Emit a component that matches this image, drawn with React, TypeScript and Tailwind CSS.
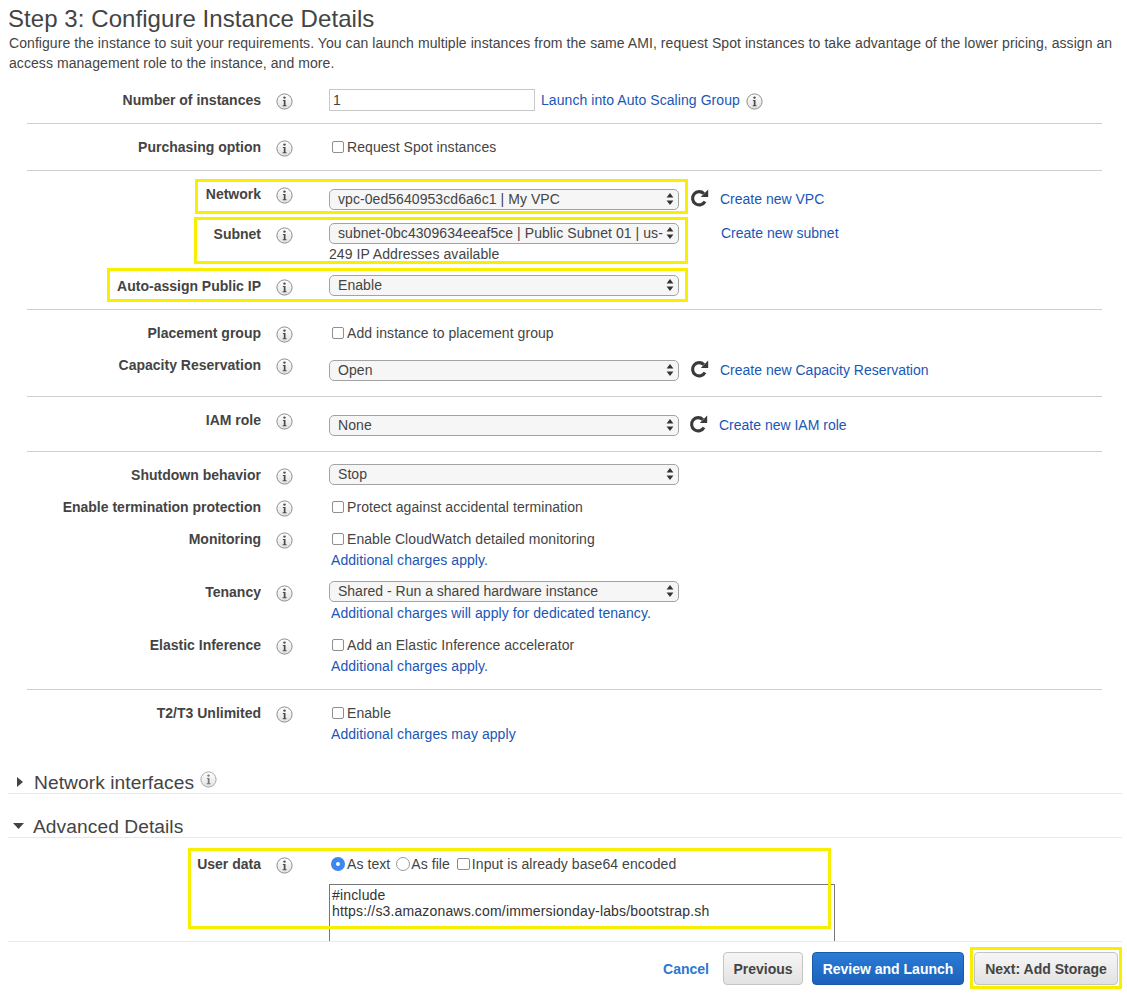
import React from "react";

const Info = ({ faint = false }: { faint?: boolean }) => (
  <svg width="17" height="17" viewBox="0 0 17 17" className="block">
    <defs>
      <linearGradient id="ig" x1="0" y1="0" x2="0" y2="1">
        <stop offset="0" stopColor="#ffffff" />
        <stop offset="1" stopColor="#e2e2e2" />
      </linearGradient>
    </defs>
    <circle cx="8.5" cy="8.5" r="7.6" fill="url(#ig)" stroke={faint ? "#a8a8a8" : "#8c8c8c"} strokeWidth="1" />
    <circle cx="8.5" cy="4.6" r="1.2" fill={faint ? "#777" : "#4a4a4a"} />
    <path d="M6.9 6.9h2.6v5.4h1v1H6.7v-1h1.1V7.9H6.9z" fill={faint ? "#777" : "#4a4a4a"} />
  </svg>
);

const Refresh = () => (
  <svg width="19" height="19" viewBox="0 0 19 19" className="block">
    <path d="M15 12.4A6.6 6.6 0 1 1 13.9 4.6" fill="none" stroke="#3a3a3a" strokeWidth="3.1" />
    <path d="M10.8 8h7.4V.6z" fill="#3a3a3a" />
  </svg>
);

const Arrows = () => (
  <svg width="8" height="14" viewBox="0 0 8 14" className="block">
    <path d="M4 1l3.4 4.6H.6zM4 13L.6 8.4h6.8z" fill="#333" />
  </svg>
);

const Select = ({ children }: { children: React.ReactNode }) => (
  <div className="flex h-[21px] w-[350px] shrink-0 items-center justify-between rounded-[5px] border border-[#a3a3a3] bg-[#f6f6f6] pb-[1px] pl-[8px] pr-[4px] text-[14px] leading-[18px] text-[#444]">
    <span className="whitespace-nowrap">{children}</span>
    <Arrows />
  </div>
);

const Check = () => (
  <span className="mr-[3px] inline-block h-[12px] w-[12px] shrink-0 rounded-[2px] border border-[#8f8f8f] bg-white" />
);

const A = ({ children }: { children: React.ReactNode }) => (
  <a className="block whitespace-nowrap text-[14px] leading-[20px] text-[#1a56b4]">{children}</a>
);

const Create = ({ children, className }: { children: React.ReactNode; className: string }) => (
  <span className={`mb-[2px] tracking-normal ${className}`}>
    <A>{children}</A>
  </span>
);

const CheckLine = ({ children }: { children: React.ReactNode }) => (
  <div className="flex h-[20px] items-center pl-[3px] text-[14px] text-[#444]">
    <Check />
    <span className="whitespace-nowrap">{children}</span>
  </div>
);

const Row = ({
  label,
  className,
  children,
}: {
  label: string;
  className?: string;
  children?: React.ReactNode;
}) => (
  <div className={`flex items-start ${className ?? ""}`}>
    <div className="w-[234px] whitespace-nowrap text-right text-[14px] font-bold leading-[20px] tracking-normal text-[#444]">{label}</div>
    <div className="ml-[15px] mr-[36px] w-[17px] pt-[3px]">
      <Info />
    </div>
    <div className="min-w-0 flex-1">{children}</div>
  </div>
);

const Section = ({ className, children }: { className: string; children: React.ReactNode }) => (
  <div className={`ml-[19px] mr-[25px] ${className}`}>{children}</div>
);

const Controls = ({ className, children }: { className: string; children: React.ReactNode }) => (
  <div className={`flex h-[21px] items-center ${className}`}>{children}</div>
);

export default function App() {
  return (
    <div className="relative h-[994px] w-[1127px] overflow-hidden bg-white pl-[8px] font-['Liberation_Sans',Arial,sans-serif] tracking-[0.065px] text-[#444]">
      <div className="h-[76px]">
        <h1 className="pt-[5px] text-[24px] font-normal leading-[28px] text-[#444]">Step 3: Configure Instance Details</h1>
        <p className="w-[1108px] pl-[1px] text-[14px] leading-[20px] text-[#444]">
          Configure the instance to suit your requirements. You can launch multiple instances from the same AMI, request Spot instances to take advantage of the lower pricing, assign an access management role to the instance, and more.
        </p>
      </div>

      <Section className="border-b border-[#cfcfcf] pb-[13px] pt-[14px]">
        <Row label="Number of instances" className="h-[20px]">
          <div className="-mt-px flex h-[22px] items-center">
            <div className="h-[22px] w-[206px] border border-[#c8c8c8] pl-[3px] text-[14px] leading-[20px]">1</div>
            <span className="ml-[6px]"><A>Launch into Auto Scaling Group</A></span>
            <span className="ml-[6px] pt-[2px]"><Info /></span>
          </div>
        </Row>
      </Section>

      <Section className="border-b border-[#cfcfcf] pb-[13px] pt-[13px]">
        <Row label="Purchasing option" className="h-[20px]">
          <CheckLine>Request Spot instances</CheckLine>
        </Row>
      </Section>

      <Section className="border-b border-[#cfcfcf] pb-[13px] pt-[13px]">
        <Row label="Network" className="h-[40px]">
          <Controls className="mt-[5px]">
            <Select>vpc-0ed5640953cd6a6c1 | My VPC</Select>
            <span className="mb-[3px] ml-[11px]"><Refresh /></span>
            <Create className="ml-[11px]">Create new VPC</Create>
          </Controls>
        </Row>
        <Row label="Subnet" className="h-[52px]">
          <Controls className="-mt-px">
            <Select>subnet-0bc4309634eeaf5ce | Public Subnet 01 | us-</Select>
            <Create className="ml-[42px]">Create new subnet</Create>
          </Controls>
          <div className="text-[14px] leading-[20px]">249 IP Addresses available</div>
        </Row>
        <Row label="Auto-assign Public IP" className="h-[20px]">
          <div className="-mt-px">
            <Select>Enable</Select>
          </div>
        </Row>
      </Section>

      <Section className="border-b border-[#cfcfcf] pb-[16px] pt-[13px]">
        <Row label="Placement group" className="h-[32px]">
          <CheckLine>Add instance to placement group</CheckLine>
        </Row>
        <Row label="Capacity Reservation" className="h-[25px]">
          <Controls className="mt-[5px]">
            <Select>Open</Select>
            <span className="mb-[3px] ml-[11px]"><Refresh /></span>
            <Create className="ml-[11px]">Create new Capacity Reservation</Create>
          </Controls>
        </Row>
      </Section>

      <Section className="border-b border-[#cfcfcf] pb-[16px] pt-[13px]">
        <Row label="IAM role" className="h-[25px]">
          <Controls className="mt-[5px]">
            <Select>None</Select>
            <span className="mb-[3px] ml-[10px]"><Refresh /></span>
            <Create className="ml-[11px]">Create new IAM role</Create>
          </Controls>
        </Row>
      </Section>

      <Section className="border-b border-[#cfcfcf] pb-[13px] pt-[13px]">
        <Row label="Shutdown behavior" className="h-[32px]">
          <div className="-mt-px"><Select>Stop</Select></div>
        </Row>
        <Row label="Enable termination protection" className="h-[32px]">
          <CheckLine>Protect against accidental termination</CheckLine>
        </Row>
        <Row label="Monitoring" className="h-[53px]">
          <CheckLine>Enable CloudWatch detailed monitoring</CheckLine>
          <div className="mt-px pl-[2px]"><A>Additional charges apply.</A></div>
        </Row>
        <Row label="Tenancy" className="h-[53px]">
          <div className="-mt-px"><Select><span className="tracking-normal">Shared - Run a shared hardware instance</span></Select></div>
          <div className="mt-[1px] pl-[2px]"><A>Additional charges will apply for dedicated tenancy.</A></div>
        </Row>
        <Row label="Elastic Inference" className="h-[41px]">
          <CheckLine>Add an Elastic Inference accelerator</CheckLine>
          <div className="mt-px pl-[2px]"><A>Additional charges apply.</A></div>
        </Row>
      </Section>

      <Section className="pt-[13px]">
        <Row label="T2/T3 Unlimited" className="h-[41px]">
          <CheckLine>Enable</CheckLine>
          <div className="mt-px pl-[2px]"><A>Additional charges may apply</A></div>
        </Row>
      </Section>

      <div className="mr-[5px] mt-[14px] flex h-[36px] items-end border-b border-[#e8e8e8]">
        <svg width="6" height="10" viewBox="0 0 6 10" className="mb-[6px] ml-[9px]">
          <path d="M0 0l6 5-6 5z" fill="#444" />
        </svg>
        <span className="ml-[11px] text-[19.2px] leading-[20px]">Network interfaces</span>
        <span className="mb-[5px] ml-[6px]"><Info faint /></span>
      </div>

      <div className="mr-[5px] flex h-[44px] items-end border-b border-[#e8e8e8]">
        <svg width="11" height="6" viewBox="0 0 11 6" className="mb-[8px] ml-[5px]">
          <path d="M0 0h11l-5.5 6z" fill="#444" />
        </svg>
        <span className="ml-[9px] text-[19.2px] leading-[20px]">Advanced Details</span>
      </div>

      <Section className="h-[103px] overflow-hidden pt-[16px]">
        <Row label="User data" className="h-[120px]">
          <div className="flex h-[20px] items-center text-[14px] leading-[20px]">
            <span className="ml-[2px] mr-[2px] flex h-[14px] w-[14px] items-center justify-center rounded-full bg-[#3b86f0]">
              <span className="h-[4px] w-[4px] rounded-full bg-white" />
            </span>
            <span>As text</span>
            <span className="ml-[6px] mr-[1px] h-[14px] w-[14px] rounded-full border border-[#9a9a9a] bg-white" />
            <span>As file</span>
            <span className="ml-[7px] mr-[2px] h-[12px] w-[13px] rounded-[2px] border border-[#8f8f8f] bg-white" />
            <span>Input is already base64 encoded</span>
          </div>
          <div className="mt-[10px] h-[120px] w-[506px] border border-[#777] pl-[2px] pt-[2px] text-[14px] leading-[16px] tracking-[0.17px] text-[#333]">
            #include<br />https://s3.amazonaws.com/immersionday-labs/bootstrap.sh
          </div>
        </Row>
      </Section>

      <div className="mr-[5px] flex h-[53px] items-start justify-end border-t border-[#e8e8e8] pr-[4px] pt-[10px] text-[14px] font-bold leading-[20px] tracking-normal">
        <a className="mr-[14px] mt-[7px] text-[#2a77d4]">Cancel</a>
        <div className="mr-[9px] flex h-[33px] w-[80px] items-center justify-center rounded-[4px] border border-[#c4c4c4] bg-gradient-to-b from-[#f6f6f6] to-[#e2e2e2] text-[#444]">Previous</div>
        <div className="mr-[10px] flex h-[33px] w-[152px] items-center justify-center rounded-[4px] border border-[#1a5ba8] bg-gradient-to-b from-[#2b7bd8] to-[#1a62b8] text-white">Review and Launch</div>
        <div className="flex h-[33px] w-[144px] items-center justify-center rounded-[4px] border border-[#c4c4c4] bg-gradient-to-b from-[#f6f6f6] to-[#e2e2e2] text-[#444]">Next: Add Storage</div>
      </div>

      <div className="pointer-events-none absolute left-[195px] top-[179px] h-[35px] w-[493px] border-[3px] border-[#f7ee00]" />
      <div className="pointer-events-none absolute left-[194px] top-[217px] h-[47px] w-[494px] border-[3px] border-[#f7ee00]" />
      <div className="pointer-events-none absolute left-[107px] top-[268px] h-[34px] w-[581px] border-[3px] border-[#f7ee00]" />
      <div className="pointer-events-none absolute left-[188px] top-[848px] h-[81px] w-[643px] border-[3px] border-[#f7ee00]" />
      <div className="pointer-events-none absolute left-[970px] top-[947px] h-[42px] w-[152px] border-[3px] border-[#f7ee00]" />
    </div>
  );
}
